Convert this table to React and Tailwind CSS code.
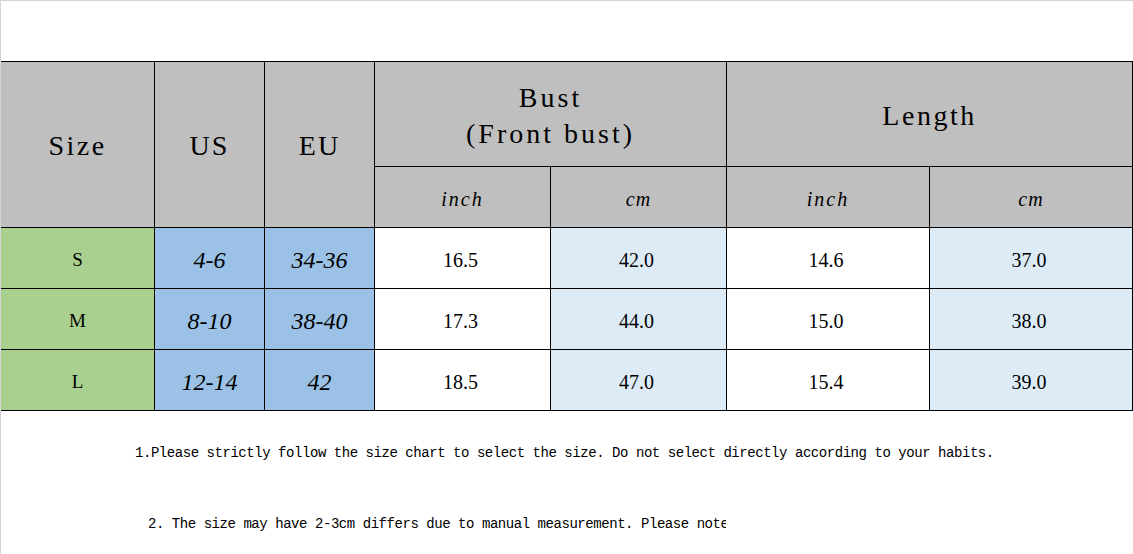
const serif = { fontFamily: '"Liberation Serif", "Times New Roman", serif' };

const rows = [
  { size: 'S', us: '4-6', eu: '34-36', bi: '16.5', bc: '42.0', li: '14.6', lc: '37.0' },
  { size: 'M', us: '8-10', eu: '38-40', bi: '17.3', bc: '44.0', li: '15.0', lc: '38.0' },
  { size: 'L', us: '12-14', eu: '42', bi: '18.5', bc: '47.0', li: '15.4', lc: '39.0' },
];

const Cell = ({ className = '', children }) => (
  <div className={`flex items-center justify-center text-black ${className}`}>{children}</div>
);

export default function App() {
  return (
    <div
      className="w-[1133px] h-[554px] overflow-hidden bg-white border-t border-l border-[#d4d4d4]"
      style={serif}
    >
      <div className="h-[60px]" />

      {/* size table, black gaps act as the grid lines */}
      <div className="grid grid-cols-[153px_109px_109px_175px_175px_202px_202px] grid-rows-[104px_60px_60px_60px_60px] gap-px bg-black pt-px pr-px pb-px w-[1132px]">
        <Cell className="row-span-2 bg-[#bfbfbf] text-[28px] tracking-[2.5px] pt-0.5">Size</Cell>
        <Cell className="row-span-2 bg-[#bfbfbf] text-[28px] tracking-[2px] pt-0.5">US</Cell>
        <Cell className="row-span-2 bg-[#bfbfbf] text-[28px] tracking-[2px] pt-0.5">EU</Cell>
        <Cell className="col-span-2 bg-[#bfbfbf] text-[28px] tracking-[3px] leading-[36px] flex-col pt-1">
          <span>Bust</span>
          <span>(Front bust)</span>
        </Cell>
        <Cell className="col-span-2 bg-[#bfbfbf] text-[28px] tracking-[2.5px] pt-1">Length</Cell>

        <Cell className="bg-[#bfbfbf] text-[20px] italic tracking-[2px] pt-1">inch</Cell>
        <Cell className="bg-[#bfbfbf] text-[20px] italic tracking-[1px] pt-1">cm</Cell>
        <Cell className="bg-[#bfbfbf] text-[20px] italic tracking-[2px] pt-1">inch</Cell>
        <Cell className="bg-[#bfbfbf] text-[20px] italic tracking-[1px] pt-1">cm</Cell>

        {rows.map((r) => [
          <Cell key={r.size + 'a'} className="bg-[#a9d08e] text-[19px] pt-1">{r.size}</Cell>,
          <Cell key={r.size + 'b'} className="bg-[#9bc2e6] text-[24px] italic pt-1">{r.us}</Cell>,
          <Cell key={r.size + 'c'} className="bg-[#9bc2e6] text-[24px] italic pt-1">{r.eu}</Cell>,
          <Cell key={r.size + 'd'} className="bg-white text-[20px] pt-1 pr-1">{r.bi}</Cell>,
          <Cell key={r.size + 'e'} className="bg-[#ddebf7] text-[20px] pt-1 pr-1">{r.bc}</Cell>,
          <Cell key={r.size + 'f'} className="bg-white text-[20px] pt-1 pr-1">{r.li}</Cell>,
          <Cell key={r.size + 'g'} className="bg-[#ddebf7] text-[20px] pt-1 pr-1">{r.lc}</Cell>,
        ])}
      </div>

      {/* notes under the chart */}
      <div
        className="text-[14px] tracking-[-0.45px] text-black whitespace-nowrap"
        style={{ fontFamily: '"Liberation Mono", "Courier New", monospace' }}
      >
        <div className="pt-[34px] pl-[134px] leading-[16px]">
          1.Please strictly follow the size chart to select the size. Do not select directly according to your habits.
        </div>
        <div className="mt-[55px] w-[725px] overflow-hidden pl-[147px] leading-[16px]">
          2. The size may have 2-3cm differs due to manual measurement. Please note
        </div>
      </div>
    </div>
  );
}
